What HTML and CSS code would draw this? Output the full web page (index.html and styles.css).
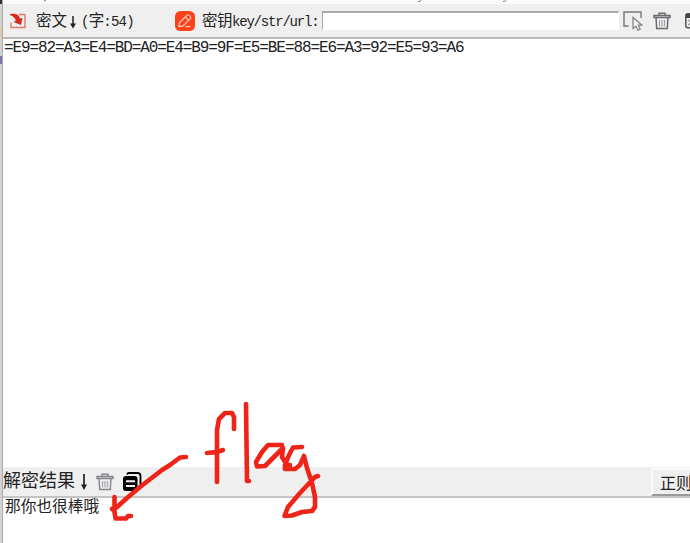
FILE: index.html
```html
<!DOCTYPE html>
<html lang="zh-CN">
<head>
<meta charset="utf-8">
<title>解密</title>
<link rel="stylesheet" href="styles.css">
</head>
<body>
<div class="window">
  <div class="edge"><i class="edge-top"></i><i class="edge-gold"></i><i class="edge-blue"></i></div>
  <main class="panel">
    <svg class="cutoff" viewBox="0 0 687 4"><path d="M415 1.500q2 .5 3.500-1.500M500 1.500q2 .5 3.500-1.500M41 0l2 1" fill="none" stroke="#777"/></svg>
    <header class="toolbar">
      <svg class="icon-import" viewBox="0 0 18 18"><path d="M10 2.500h6v13H2v-5" fill="none" stroke="#e2786b" stroke-width="1.400"/><path d="M1 2c5-.5 9 0 10 4.500L13.500 6l-1.500 7L4.500 10l2.400-1.500C6 6 4 4 1 3z" fill="#d92b1c"/></svg>
      <div class="label cipher"><span>密文</span><svg class="down" viewBox="0 0 14 20"><path d="M6 4v11" stroke="#222" stroke-width="1.500"/><path d="M3 11.500h6L6 16.500z" fill="#222"/></svg><span class="count">(<b>字</b>:54)</span></div>
      <svg class="icon-key" viewBox="0 0 20 20"><rect width="20" height="20" rx="5.500" fill="#fb4218"/><g fill="none" stroke="#ffc2ae" stroke-width="1.300" stroke-linejoin="round"><path d="M3.800 15.500l.8-4L12 4.200q1-.8 2 0l1.400 1.400q.8 1 0 2L8 15z"/><path d="M10.300 6l3.500 3.500M10.500 15.600h5"/></g></svg>
      <label class="label key" for="key"><span>密钥</span><span class="ascii">key/str/url:</span></label>
      <input class="key-input" id="key">
      <svg class="icon-pick" viewBox="0 0 20 20"><path d="M5.500 15H1V1h17v6" fill="none" stroke="#777" stroke-width="1.400"/><path d="M10 6.500v11l3-2.300 2 4 2.200-1-1.800-4h3.600z" fill="#f4f4f4" stroke="#858585" stroke-width="1.300"/></svg>
      <svg class="icon-trash" viewBox="0 0 18 18"><g fill="none" stroke="#6a6a70" stroke-width="1.500"><path d="M6 3V1.200h6V3M1 5.500V3.500h16v2zM3 5.500l.7 11h10.600l.7-11"/><path d="M6.500 8v6.500M9 8v6.500M11.500 8v6.500" stroke="#a4a4aa" stroke-width="1.200"/></g></svg>
      <svg class="icon-console" viewBox="0 0 16 16"><rect x=".8" y=".8" width="14.400" height="14" rx="2" fill="#eee" stroke="#555" stroke-width="1.500"/><path d="M1 3h14" stroke="#444" stroke-width="4"/><path d="M3 7l3 2.500L3 12" fill="none" stroke="#777"/></svg>
    </header>
    <section class="source">=E9=82=A3=E4=BD=A0=E4=B9=9F=E5=BE=88=E6=A3=92=E5=93=A6</section>
    <header class="resultbar">
      <span class="result-title">解密结果</span>
      <svg class="result-down" viewBox="0 0 20 20"><path d="M8 2v13" stroke="#222" stroke-width="1.700"/><path d="M5 12.500h6L8 18z" fill="#222"/></svg>
      <svg class="icon-trash2" viewBox="0 0 18 18"><g fill="none" stroke="#85858b" stroke-width="1.400"><path d="M6 3V1.200h6V3M1 5.500V3.500h16v2zM3 5.500l.7 11h10.600l.7-11"/><path d="M6.500 8v6.500M9 8v6.500M11.500 8v6.500" stroke="#a4a4aa" stroke-width="1.200"/></g></svg>
      <svg class="icon-copy" viewBox="0 0 19 20"><path d="M4 2.500Q4.500 1 6 1h8.500Q17.500 1 17.500 4v9q0 2-1.500 2.500" fill="none" stroke="#000" stroke-width="1.800"/><rect y="4" width="14.500" height="15" rx="3" fill="#000"/><path d="M3 9.300h9M3 14h9" stroke="#f4f4f4" stroke-width="2"/></svg>
      <button class="regex">正则</button>
    </header>
    <section class="result">那你也很棒哦</section>
  </main>
  <svg class="ink" viewBox="0 0 690 543"><g fill="none" stroke="#ee2419" stroke-width="4.600" stroke-linecap="round" stroke-linejoin="round">
    <path d="M186 457L180 457.500 170 465 162 470 140 487 127 498 117 507 112 509M114.500 497V512L115.500 518.500H126L128 516H131"/>
    <path d="M217 482V430L219 419 225 413H232L234 417V429M207 453L217 452 223 450M246 404L247 481H249"/>
    <path d="M282 445H268L262 452 256 462 257 466.500 265 466 275 456 283 448 282 457 287 465H290M302 447L293 447.500 289 455 285 465V469H295L300 465 304 456 307 468 312 483 315 497V507L312 511 302 512 292 515.500 284.500 516 288 507 300 493 315 477 318 476"/>
  </g></svg>
</div>
</body>
</html>
```
FILE: styles.css
```css
* { box-sizing: border-box; }
body { margin: 0; overflow: hidden; background: #fff; color: #222; font-family: "Liberation Mono", "Noto Sans CJK SC", monospace; }
.window { position: relative; display: flex; width: 690px; height: 543px; overflow: hidden; }
.edge { display: flex; flex-direction: column; flex: none; width: 3px; background: #d2d2d4; border-right: 1px solid #aaa; }
.edge-top { height: 4px; background: #333; }
.edge-gold { height: 12px; margin-top: 22px; background: #d8c9b0; }
.edge-blue { height: 8px; margin-top: 18px; background: #7777a8; }
.panel { display: flex; flex-direction: column; flex: none; width: 687px; }
svg { display: block; flex: none; }
.cutoff { width: 687px; height: 4px; background: #fcfcfc; }
.toolbar { display: flex; align-items: center; flex: none; height: 35px; background: #efefef; border-bottom: 2px solid #b9b9b9; white-space: nowrap; }
.icon-import { width: 18px; height: 18px; margin-left: 6px; }
.label { display: flex; align-items: center; flex: none; height: 20px; padding-top: 2px; font-size: 15.500px; line-height: 20px; }
.cipher { width: 138px; margin-left: 9px; }
.down { width: 14px; height: 20px; }
.count { font-size: 14px; letter-spacing: -.8px; }
.count b { font-size: 15.500px; font-weight: 400; }
.icon-key { width: 20px; height: 20px; margin-left: 1px; }
.key { width: 121px; margin-left: 7px; }
.key span:first-child { width: 30px; letter-spacing: -.5px; }
.ascii { font-size: 14px; letter-spacing: -1.200px; }
.key-input { flex: none; width: 297px; height: 19px; margin: 0 0 0 -1px; padding: 0; border: 1px solid #fff; border-top: 2px solid #aaa; border-left-color: #aaa; background: #fff; outline: 0; }
.icon-pick { width: 20px; height: 20px; margin-left: 4px; }
.icon-trash { width: 18px; height: 18px; margin-left: 10px; }
.icon-console { width: 16px; height: 16px; margin-left: 14px; }
.source { flex: none; height: 428px; padding-left: 1px; font-size: 16px; line-height: 19px; letter-spacing: -1.090px; }
.resultbar { display: flex; align-items: center; flex: none; height: 31px; background: #efefef; border-bottom: 2px solid #c4c4c4; white-space: nowrap; }
.result-title { width: 73px; padding-top: 2px; font-size: 18px; line-height: 27px; }
.result-down { width: 20px; height: 20px; }
.icon-trash2 { width: 18px; height: 18px; }
.icon-copy { width: 19px; height: 20px; margin-left: 9px; }
.regex { flex: none; width: 60px; height: 28px; margin: 0 -21px 0 auto; padding: 0 0 0 7px; border: 2px solid #fafafa; border-bottom-color: #999; border-radius: 0; background: #efefef; color: #222; text-align: left; font: 16px/22px "Noto Sans CJK SC", sans-serif; }
.result { flex: 1; padding-left: 2px; font-size: 15.700px; line-height: 20px; }
.ink { position: absolute; inset: 0; width: 690px; height: 543px; pointer-events: none; }
```
